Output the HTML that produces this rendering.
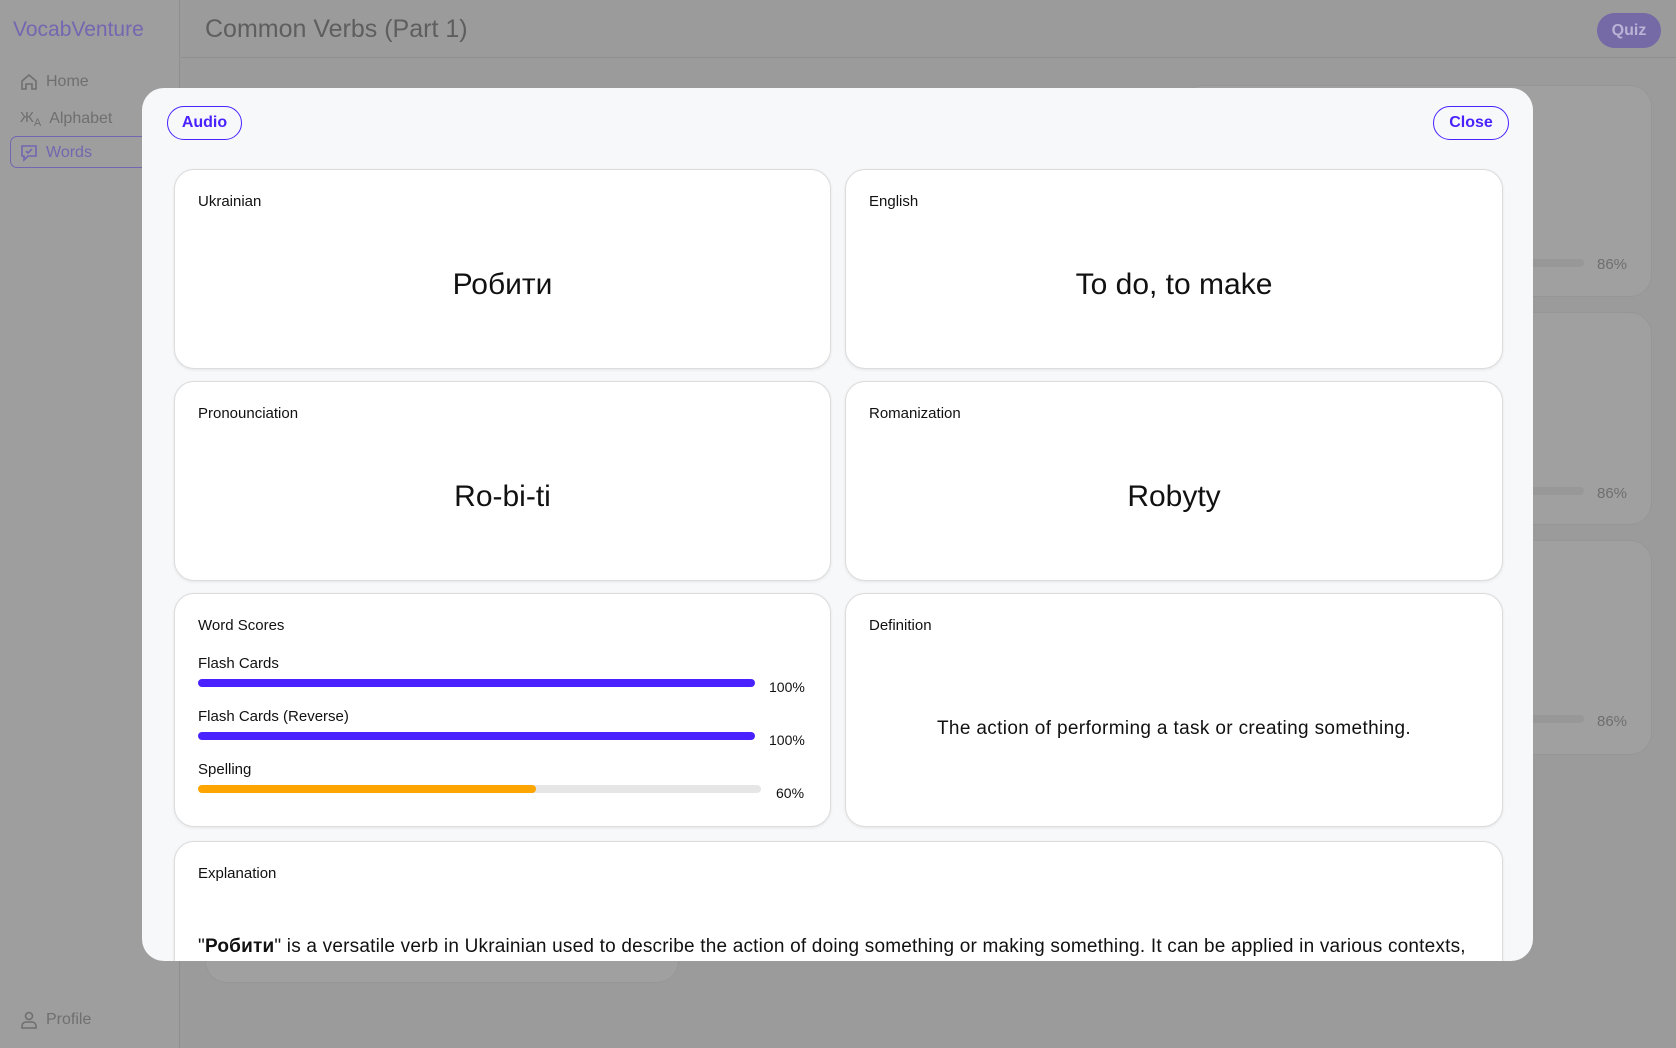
<!DOCTYPE html>
<html><head><meta charset="utf-8"><style>
*{box-sizing:border-box;margin:0;padding:0}
body{width:1676px;height:1048px;overflow:hidden;background:#9b9b9b;font-family:"Liberation Sans",sans-serif;position:relative}
.abs{position:absolute}
.side{left:0;top:0;width:180px;height:1048px;background:#9e9e9e;border-right:1px solid #8f8f8f}
.logo{left:13px;top:18px;font-size:21px;color:#7466b0}
.nav{left:20px;font-size:16px;color:#6f6f6f;display:flex;align-items:center;gap:8px}
.hdr{left:181px;top:0;right:0;height:58px;border-bottom:1px solid #8f8f8f}
.title{left:205px;top:15px;font-size:25px;color:#5e5e5e}
.quiz{left:1597px;top:13px;width:64px;height:35px;border-radius:18px;background:#7569a6;color:#b9b3d6;font-size:16px;font-weight:bold;text-align:center;line-height:35px}
.bg{background:#a0a0a0;border:1px solid #969696;border-radius:22px}
.pct{font-size:15px;color:#6f6f6f}
.trk{height:8px;border-radius:4px;background:#989898;left:1500px;width:84px}
.modal{left:142px;top:88px;width:1391px;height:873px;background:#f7f8fa;border-radius:22px;overflow:hidden}
.btn{position:absolute;top:18px;height:34px;border:1.5px solid #4a22ff;border-radius:18px;color:#4a22ff;font-size:16px;font-weight:bold;text-align:center;line-height:31px}
.card{position:absolute;background:#fff;border:1px solid #dcdcdc;border-radius:20px;box-shadow:0 1px 3px rgba(0,0,0,.08)}
.lab{position:absolute;left:23px;top:23px;font-size:15px;color:#111}
.big{position:absolute;left:0;right:0;top:98px;text-align:center;font-size:30px;color:#111}
.sl{position:absolute;left:23px;font-size:15px;color:#111}
.bar{position:absolute;left:23px;height:8px;border-radius:4px}
.bp{position:absolute;font-size:14px;color:#111}
</style></head><body>
<div class="abs side"></div>
<div class="abs logo">VocabVenture</div>
<div class="abs nav" style="top:73px"><svg width="18" height="18" viewBox="0 0 18 18" fill="none" stroke="#6f6f6f" stroke-width="1.6"><path d="M2 8L9 2l7 6v8h-4v-5H6v5H2z"/></svg>Home</div>
<div class="abs nav" style="top:109px"><span style="font-size:15px">Ж<sub style="font-size:11px">A</sub></span>Alphabet</div>
<div class="abs" style="left:10px;top:136px;width:160px;height:32px;border:1px solid #7466b0;border-radius:7px"></div>
<div class="abs nav" style="top:144px;color:#7466b0"><svg width="18" height="18" viewBox="0 0 18 18" fill="none" stroke="#7466b0" stroke-width="1.6"><path d="M2 2h14v10H8l-4 4v-4H2z"/><path d="M6 7l2 2 4-4"/></svg>Words</div>
<div class="abs nav" style="top:1011px"><svg width="18" height="18" viewBox="0 0 18 18" fill="none" stroke="#6f6f6f" stroke-width="1.6"><circle cx="9" cy="5" r="3.5"/><path d="M2 17v-2a4 4 0 0 1 4-4h6a4 4 0 0 1 4 4v2z"/></svg>Profile</div>
<div class="abs hdr"></div>
<div class="abs title">Common Verbs (Part 1)</div>
<div class="abs quiz">Quiz</div>
<div class="abs bg" style="left:1180px;top:85px;width:472px;height:212px"></div>
<div class="abs bg" style="left:1180px;top:312px;width:472px;height:213px"></div>
<div class="abs bg" style="left:1180px;top:540px;width:472px;height:215px"></div>
<div class="abs bg" style="left:205px;top:760px;width:474px;height:223px"></div>
<div class="abs trk" style="top:259px"></div>
<div class="abs trk" style="top:487px"></div>
<div class="abs trk" style="top:715px"></div>
<div class="abs pct" style="left:1597px;top:256px">86%</div>
<div class="abs pct" style="left:1597px;top:485px">86%</div>
<div class="abs pct" style="left:1597px;top:713px">86%</div>
<div class="abs modal">
<div class="btn" style="left:25px;width:75px">Audio</div>
<div class="btn" style="left:1291px;width:76px">Close</div>
<div class="card" style="left:32px;top:81px;width:657px;height:200px"><div class="lab">Ukrainian</div><div class="big">Робити</div></div>
<div class="card" style="left:703px;top:81px;width:658px;height:200px"><div class="lab">English</div><div class="big">To do, to make</div></div>
<div class="card" style="left:32px;top:293px;width:657px;height:200px"><div class="lab">Pronounciation</div><div class="big">Ro-bi-ti</div></div>
<div class="card" style="left:703px;top:293px;width:658px;height:200px"><div class="lab">Romanization</div><div class="big">Robyty</div></div>
<div class="card" style="left:32px;top:505px;width:657px;height:234px"><div class="lab">Word Scores</div>
<div class="sl" style="top:61px">Flash Cards</div><div class="bar" style="top:85px;width:557px;background:#4a22ff"></div><div class="bp" style="left:594px;top:85px">100%</div>
<div class="sl" style="top:114px">Flash Cards (Reverse)</div><div class="bar" style="top:138px;width:557px;background:#4a22ff"></div><div class="bp" style="left:594px;top:138px">100%</div>
<div class="sl" style="top:167px">Spelling</div><div class="bar" style="top:191px;width:563px;background:#e6e6e6"></div><div class="bar" style="top:191px;width:338px;background:#ffa500"></div><div class="bp" style="left:601px;top:191px">60%</div>
</div>
<div class="card" style="left:703px;top:505px;width:658px;height:234px"><div class="lab">Definition</div><div class="big" style="top:124px;font-size:19px;letter-spacing:0.35px">The action of performing a task or creating something.</div></div>
<div class="card" style="left:32px;top:753px;width:1329px;height:200px"><div class="lab">Explanation</div>
<div style="position:absolute;left:23px;top:94px;font-size:19px;letter-spacing:0.2px;color:#111;white-space:nowrap">"<b>Робити</b>" is a versatile verb in Ukrainian used to describe the action of doing something or making something. It can be applied in various contexts,</div></div>
</div>
</body></html>
